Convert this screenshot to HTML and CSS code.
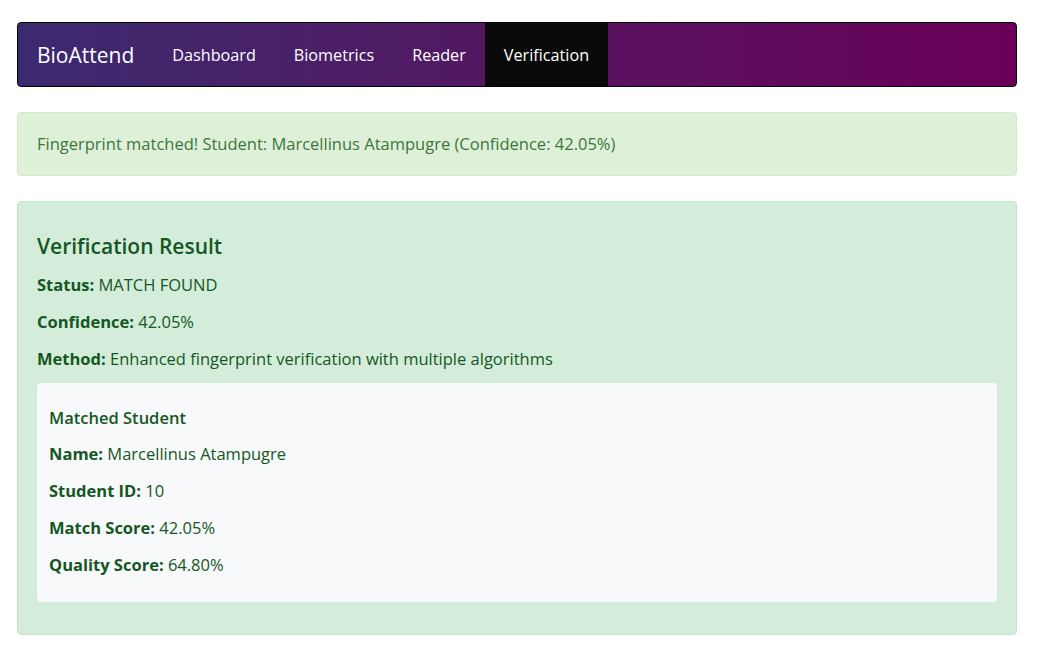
FILE: index.html
```html
<!DOCTYPE html>
<html>
<head>
<meta charset="utf-8">
<title>BioAttend - Verification</title>
<link rel="stylesheet" href="styles.css">
</head>
<body>
<div class="page">
  <nav class="navbar">
    <span class="brand">BioAttend</span>
    <a class="nav-link" href="#">Dashboard</a>
    <a class="nav-link" href="#">Biometrics</a>
    <a class="nav-link" href="#">Reader</a>
    <a class="nav-link active" href="#">Verification</a>
  </nav>

  <div class="alert">Fingerprint matched! Student: Marcellinus Atampugre (Confidence: 42.05%)</div>

  <div class="result">
    <h4 class="result-title">Verification Result</h4>
    <p><strong>Status:</strong> MATCH FOUND</p>
    <p><strong>Confidence:</strong> 42.05%</p>
    <p class="last"><strong>Method:</strong> Enhanced fingerprint verification with multiple algorithms</p>
    <div class="student">
      <h5 class="student-title">Matched Student</h5>
      <p><strong>Name:</strong> Marcellinus Atampugre</p>
      <p><strong>Student ID:</strong> 10</p>
      <p><strong>Match Score:</strong> 42.05%</p>
      <p><strong>Quality Score:</strong> 64.80%</p>
    </div>
  </div>
</div>
</body>
</html>
```

FILE: styles.css
```css
html, body {
  margin: 0;
  padding: 0;
  background: #ffffff;
}
body {
  font-family: "Open Sans", "Noto Sans", sans-serif;
  font-size: 16.5px;
  line-height: 24px;
}
.page {
  width: 1000px;
  padding: 22px 0 0 17px;
}
.navbar {
  display: flex;
  align-items: stretch;
  height: 63px;
  border: 1px solid #000;
  border-radius: 4px;
  background: linear-gradient(90deg, #3b2a6f 0%, #4a1f67 30%, #5a1260 60%, #6a0058 100%);
  overflow: hidden;
}
.brand {
  display: flex;
  align-items: center;
  padding: 0 19px;
  color: #fff;
  font-size: 21px;
}
.nav-link {
  display: flex;
  align-items: center;
  padding: 0 19px;
  color: #fff;
  font-size: 16.2px;
  text-decoration: none;
}
.nav-link.active {
  background: #0a0a0a;
}
.alert {
  margin-top: 25px;
  padding: 19px 19px;
  background: #dff0d8;
  border: 1px solid #d6e9c6;
  border-radius: 4px;
  color: #3c763d;
}
.result {
  margin-top: 25px;
  padding: 20px 19px;
  background: #d4edda;
  border: 1px solid #c3e6cb;
  border-radius: 4px;
  color: #155724;
}
.result-title {
  margin: 12px 0 15px;
  font-size: 21px;
  line-height: 24px;
  font-weight: 600;
}
.result p {
  margin: 0 0 13px;
}
.result p.last {
  margin-bottom: 12px;
}
.student {
  margin-bottom: 12px;
  padding: 23px 12px 12px;
  background: #f8f9fa;
  border-radius: 4px;
}
.student-title {
  margin: 0 0 12px;
  font-size: 16.5px;
  line-height: 24px;
  font-weight: 600;
}
strong {
  font-weight: 700;
}
```
